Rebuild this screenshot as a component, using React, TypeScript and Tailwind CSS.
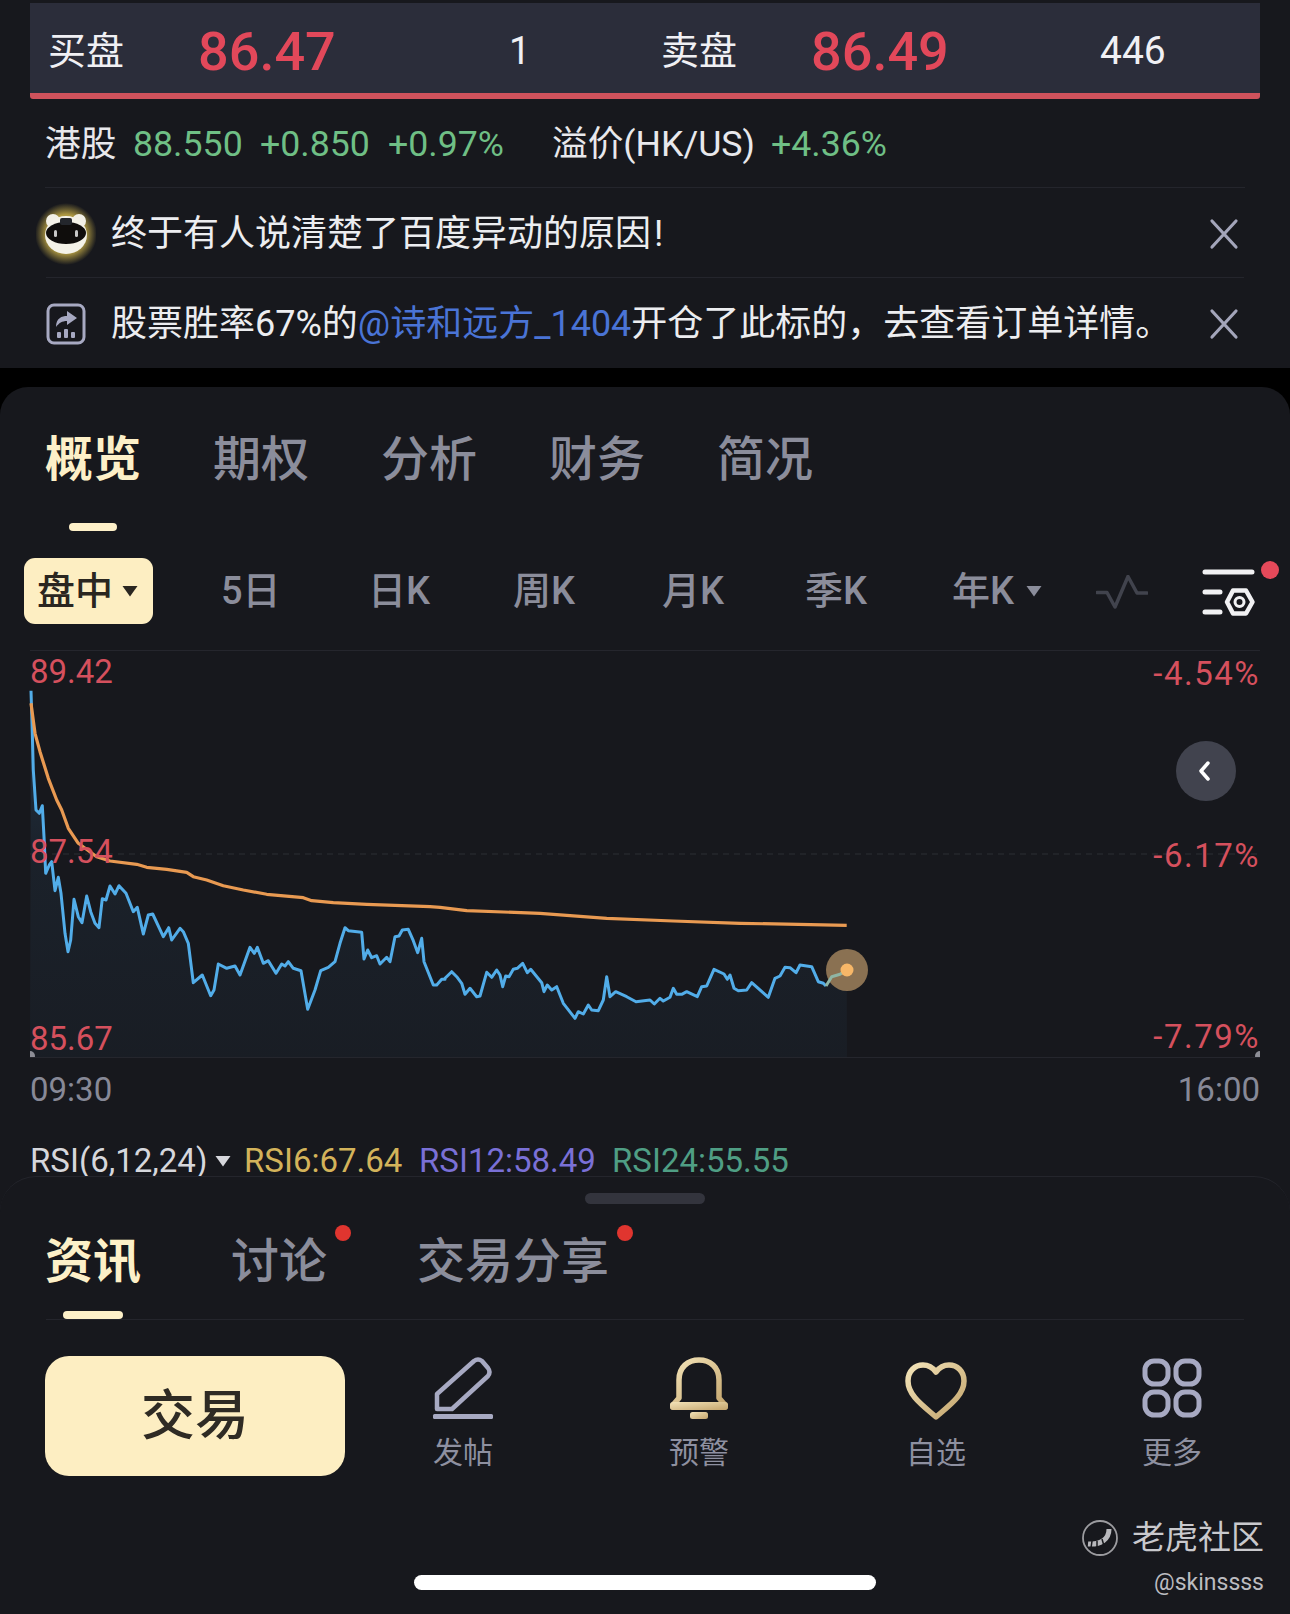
import React from "react";

const z3 = (p: number[][]) => p.map(([x, y]) => `${(x / 3).toFixed(1)},${(660 + y / 3).toFixed(1)}`);
const z4 = (p: number[][]) => p.map(([x, y]) => `${(440 + x / 3).toFixed(1)},${(860 + y / 3).toFixed(1)}`);

const blue = [
  ...z3([[93,92],[97,220],[100,330],[108,450],[118,460],[127,437],[132,530],[137,640],[148,615],[155,605],[165,692],[175,652],[183,700],[195,820],[204,875],[212,840],[222,718],[235,770],[246,788],[260,708],[272,755],[285,790],[297,803],[307,716],[318,720],[330,678],[345,702],[357,677],[378,700],[400,755],[412,742],[430,822],[445,765],[458,762],[490,830],[506,803],[515,840],[540,805],[550,815],[565,850],[580,968],[607,945],[632,1007],[642,990],[655,912],[680,925],[705,918],[720,945],[750,862],[763,880],[772,862],[790,910],[805,902],[828,940],[845,912],[855,918],[865,905],[880,925],[903,932],[923,1048],[945,990],[962,932],[985,922],[1005,905],[1020,850],[1035,803],[1045,812],[1085,817],[1092,897],[1103,870],[1115,893],[1130,887],[1140,912],[1160,892],[1170,905],[1185,830],[1197,828],[1207,810],[1225,808],[1240,842],[1253,878],[1265,835],[1272,905],[1300,975],[1310,975],[1325,958],[1335,958]]),
  ...z4([[15,355],[35,335],[50,350],[65,370],[75,403],[90,385],[110,410],[120,408],[140,337],[155,352],[170,330],[180,345],[188,380],[197,348],[207,350],[220,328],[232,325],[248,310],[262,338],[272,328],[305,368],[312,395],[322,375],[335,390],[350,380],[370,430],[405,475],[415,455],[430,462],[445,435],[455,450],[475,452],[490,420],[500,350],[510,410],[527,395],[560,410],[588,425],[630,420],[643,432],[660,415],[670,423],[690,412],[700,385],[710,403],[725,403],[740,395],[772,410],[785,380],[800,378],[822,328],[852,342],[862,358],[870,345],[882,385],[895,392],[920,390],[935,368],[985,412],[1005,355],[1020,348],[1035,322],[1050,323],[1068,338],[1080,315],[1115,320],[1135,365],[1150,370],[1158,378]]),
];
const tail = z4([[1158,378],[1175,350],[1200,343],[1220,330]]);
const orange = [
  ...z3([[93,130],[105,220],[120,275],[145,355],[170,420],[185,450],[205,505],[235,550],[290,590],[330,603],[410,613],[440,622],[500,628],[560,637],[580,650],[620,660],[670,677],[730,690],[800,703],[910,713],[935,722],[1000,728],[1100,733],[1290,740]]),
  ...z4([[0,142],[80,152],[300,160],[500,175],[700,183],[900,190],[1220,196]]),
];
const area = `30,1057 ${blue.join(" ")} ${tail.join(" ")} 847,1057`;

function Chart() {
  return (
    <svg viewBox="0 650 1290 408" className="block w-[1290px] h-[408px]">
      <defs>
        <linearGradient id="area" x1="0" y1="0" x2="0" y2="1">
          <stop offset="0" stopColor="#3f8fcf" stopOpacity="0.26" />
          <stop offset="0.45" stopColor="#3f7fb0" stopOpacity="0.09" />
          <stop offset="1" stopColor="#3f7fb0" stopOpacity="0.05" />
        </linearGradient>
      </defs>
      <polygon points={area} fill="url(#area)" />
      <line x1="30" y1="854" x2="1260" y2="854" stroke="#26272d" strokeWidth="1.5" strokeDasharray="6 5" />
      <polyline points={blue.join(" ")} fill="none" stroke="#52ade9" strokeWidth="3" strokeLinejoin="round" />
      <polyline points={orange.join(" ")} fill="none" stroke="#e99a52" strokeWidth="3.2" strokeLinejoin="round" />
      <circle cx="847" cy="970" r="21" fill="#8a7152" />
      <polyline points={tail.join(" ")} fill="none" stroke="#8fb5a4" strokeWidth="3" strokeLinejoin="round" />
      <circle cx="847" cy="970" r="6.5" fill="#f7b768" />
      <path d="M30 1052 A5 5 0 0 1 30 1062 Z" fill="#8d8e96" transform="translate(0 -1)" />
      <path d="M1260 1052 A5 5 0 0 0 1260 1062 Z" fill="#8d8e96" transform="translate(0 -1)" />
    </svg>
  );
}

const Close = () => (
  <svg width="32" height="32" viewBox="0 0 32 32" className="shrink-0 mr-[4px]">
    <path d="M4 3 L28 29 M28 3 L4 29" stroke="#a3a5ba" strokeWidth="3.200" strokeLinecap="round" />
  </svg>
);

const Panda = () => (
  <svg width="60" height="62" viewBox="3 2 60 62" className="shrink-0">
    <defs>
      <radialGradient id="glow">
        <stop offset="0.62" stopColor="#d4b94c" stopOpacity="0.8" />
        <stop offset="1" stopColor="#c9b04a" stopOpacity="0" />
      </radialGradient>
    </defs>
    <circle cx="33" cy="33" r="31" fill="url(#glow)" />
    <circle cx="20" cy="20" r="7" fill="#f2f0e6" />
    <circle cx="46" cy="20" r="7" fill="#f2f0e6" />
    <ellipse cx="33" cy="34" rx="21" ry="19" fill="#f4f2e8" />
    <ellipse cx="33" cy="32" rx="20" ry="11" fill="#0f0d0c" />
    <rect x="27" y="17" width="12" height="7" rx="2" fill="#23262c" />
    <rect x="21" y="29" width="3" height="7" rx="1.500" fill="#c8c8c8" />
    <rect x="42" y="29" width="3" height="7" rx="1.500" fill="#c8c8c8" />
  </svg>
);

const ShareIcon = () => (
  <svg width="40" height="42" viewBox="0 0 40 42" className="shrink-0">
    <rect x="2" y="2" width="36" height="38" rx="6" fill="none" stroke="#a7a9c2" strokeWidth="3" />
    <path d="M10 24 C10 15 16 13 21 13 V8 L31 15 L21 22 V18 C16 18 13 20 10 24 Z" fill="#a7a9c2" />
    <rect x="11" y="29" width="4" height="6" rx="1" fill="#a7a9c2" />
    <rect x="18" y="26" width="4" height="9" rx="1" fill="#a7a9c2" />
    <rect x="25" y="29" width="4" height="6" rx="1" fill="#a7a9c2" />
  </svg>
);

const Tri = ({ color }: { color: string }) => (
  <svg width="16" height="12" viewBox="0 0 16 12" className="shrink-0">
    <path d="M0.5 1 H15.500 L8 11.500 Z" fill={color} />
  </svg>
);

const Pulse = () => (
  <svg width="52" height="34" viewBox="0 0 52 34">
    <path d="M1 17.500 H11 L19 32 L32 1.500 L41 18 H51" fill="none" stroke="#41434d" strokeWidth="3.500" strokeLinecap="round" strokeLinejoin="round" />
  </svg>
);

const Settings = () => (
  <svg width="78" height="62" viewBox="0 0 78 62">
    <path d="M3 11 H50 M3 31 H18 M3 51 H18" stroke="#f1f1f3" strokeWidth="5" strokeLinecap="round" />
    <path d="M25 41 L31 29.500 H44 L50.500 41 L44 52.500 H31 Z" fill="none" stroke="#f1f1f3" strokeWidth="4.500" strokeLinejoin="round" />
    <circle cx="37.500" cy="41" r="4.500" fill="none" stroke="#f1f1f3" strokeWidth="3" />
    <circle cx="68" cy="9" r="9" fill="#e5495a" />
  </svg>
);

const Pencil = () => (
  <svg width="64" height="64" viewBox="0 0 64 64">
    <path d="M6 53 V38 L43 5 Q47 2 51 5 L57 12 Q60 16 57 20 L21 53 Z" fill="none" stroke="#a7a9c2" strokeWidth="4.500" strokeLinejoin="round" />
    <rect x="2" y="58" width="60" height="5" rx="1.500" fill="#a7a9c2" />
  </svg>
);

const GoldDefs = ({ id }: { id: string }) => (
  <defs>
    <linearGradient id={id} x1="0" y1="0" x2="1" y2="1">
      <stop offset="0" stopColor="#f3e3b8" />
      <stop offset="1" stopColor="#c3a46c" />
    </linearGradient>
  </defs>
);

const Bell = () => (
  <svg width="64" height="64" viewBox="0 0 64 64">
    <GoldDefs id="g1" />
    <path d="M12 42 V24 C12 11 21 4 32 4 C43 4 52 11 52 24 V42 L58 49 V51 H6 V49 Z" fill="none" stroke="url(#g1)" strokeWidth="5.500" strokeLinejoin="round" />
    <rect x="3" y="46" width="58" height="8" rx="3" fill="url(#g1)" />
    <rect x="23" y="56" width="18" height="7" rx="2.500" fill="url(#g1)" />
  </svg>
);

const Heart = () => (
  <svg width="64" height="60" viewBox="0 0 64 60" className="mt-[6px]">
    <GoldDefs id="g2" />
    <path d="M32 56 C18 44 4 34 4 20 C4 10 11 4 19 4 C25 4 29 7 32 11 C35 7 39 4 45 4 C53 4 60 10 60 20 C60 34 46 44 32 56 Z" fill="none" stroke="url(#g2)" strokeWidth="5.500" strokeLinejoin="round" />
  </svg>
);

const Grid4 = () => (
  <svg width="60" height="60" viewBox="0 0 60 60">
    {[[3, 3], [34, 3], [3, 34], [34, 34]].map(([x, y]) => (
      <rect key={`${x}-${y}`} x={x} y={y} width="23" height="23" rx="9" fill="none" stroke="#a7a9c2" strokeWidth="5" />
    ))}
  </svg>
);

const TigerLogo = () => (
  <svg width="38" height="38" viewBox="0 0 38 38" className="shrink-0">
    <circle cx="19" cy="19" r="17" fill="none" stroke="#9c9ca0" strokeWidth="1.800" />
    <path d="M28 10 C28 20 20 26 7 25" fill="none" stroke="#b8b8bc" strokeWidth="5" />
    <path d="M11 22 L10 29 M16 22 L16 30 M21 20 L23 27" stroke="#17181d" strokeWidth="1.500" />
  </svg>
);

const Action = ({ label, children, w }: { label: string; children: React.ReactNode; w: string }) => (
  <div className={`flex flex-col items-center ${w}`}>
    <div className="h-[64px] flex items-center justify-center">{children}</div>
    <span className="mt-[15px] text-[30px] leading-[36px] text-[#8e90a0]">{label}</span>
  </div>
);

export default function App() {
  return (
    <div
      lang="zh-CN"
      className="w-[1290px] h-[1614px] overflow-hidden bg-black flex flex-col relative font-[family-name:Roboto,'Noto_Sans_CJK_SC',sans-serif]"
    >
      {/* quote section */}
      <section className="h-[368px] shrink-0 bg-[#17181d] pt-[3px] px-[30px]">
        <div className="h-[96px] bg-[#2b2d3a] border-b-[6px] border-[#d0525c] rounded-b-[3px] flex items-center pl-[18px] pt-[6px] text-[#f0f0f4]">
          <span className="w-[150px] text-[38px]">买盘</span>
          <span className="w-[311px] text-[54px] font-medium text-[#e2485a]">86.47</span>
          <span className="w-[152px] text-[38px]">1</span>
          <span className="w-[150px] text-[38px]">卖盘</span>
          <span className="w-[289px] text-[54px] font-medium text-[#e2485a]">86.49</span>
          <span className="text-[39px]">446</span>
        </div>
        <div className="h-[89px] mx-[15px] pt-[3px] flex items-center text-[35.7px] text-[#6fbf85] border-b border-[#24252c]">
          <span className="w-[88px] text-[#e8e8ec]">港股</span>
          <span className="w-[127px]">88.550</span>
          <span className="w-[128px]">+0.850</span>
          <span className="w-[164px]">+0.97%</span>
          <span className="w-[219px] text-[#e8e8ec]">溢价(HK/US)</span>
          <span>+4.36%</span>
        </div>
        <div className="h-[90px] mx-[16px] pt-[2px] flex items-center border-b border-[#24252c]">
          <div className="w-[66px] -ml-[13px] mr-[12px] shrink-0 flex justify-center">
            <Panda />
          </div>
          <span className="flex-1 text-[36px] text-[#ecedf0]">
            终于有人说清楚了百度异动的原因<span className="ml-[3px]">!</span>
          </span>
          <Close />
        </div>
        <div className="h-[89px] mx-[16px] pt-[2px] flex items-center">
          <div className="w-[65px] shrink-0 mr-[0px]">
            <ShareIcon />
          </div>
          <span className="flex-1 text-[36px] text-[#ecedf0] whitespace-nowrap">
            股票胜率67%的<span className="text-[#4a74d6]">@诗和远方_1404</span>开仓了此标的，去查看订单详情。
          </span>
          <Close />
        </div>
      </section>

      {/* main card */}
      <main className="mt-[19px] flex-1 flex flex-col rounded-t-[28px] bg-[#17181d] min-h-0">
        <div className="h-[136px] pt-[10px] pl-[45px] flex items-center gap-[72px] text-[48px] text-[#8b8d9b] font-medium shrink-0">
          <span className="font-bold text-[#fdf0c8]">概览</span>
          <span>期权</span>
          <span>分析</span>
          <span>财务</span>
          <span>简况</span>
        </div>
        <div className="h-[8px] w-[48px] ml-[69px] rounded-full bg-[#fdf0c8] shrink-0" />

        <div className="mt-[27px] h-[66px] flex items-center pl-[24px] text-[38px] text-[#8b8d9b] font-medium shrink-0">
          <div className="w-[129px] h-[66px] rounded-[11px] bg-[#fdeec2] text-[#2a2620] flex items-center pl-[13px] gap-[9px] mr-[69px]">
            <span>盘中</span>
            <Tri color="#2a2620" />
          </div>
          <span className="w-[147px] -ml-[1px]">5日</span>
          <span className="w-[145px]">日K</span>
          <span className="w-[149px]">周K</span>
          <span className="w-[143px]">月K</span>
          <span className="w-[147px]">季K</span>
          <span className="w-[74px]">年K</span>
          <span className="mr-[54px] flex">
            <Tri color="#8b8d9b" />
          </span>
          <span className="mr-[54px] mt-[2px] flex">
            <Pulse />
          </span>
          <span className="flex mt-[2px]">
            <Settings />
          </span>
        </div>

        <div className="mt-[26px] mx-[30px] border-t border-[#25262d] shrink-0" />

        <div className="relative h-[408px] shrink-0 -mt-[1px]">
          <Chart />
          <div className="absolute left-[30px] right-[30px] bottom-0 border-b border-[#25262d]" />
          <span className="absolute left-[30px] top-[1px] text-[33px] leading-[42px] text-[#d5505d]">89.42</span>
          <span className="absolute left-[30px] top-[181px] text-[33px] leading-[42px] text-[#d5505d]">87.54</span>
          <span className="absolute left-[30px] top-[368px] text-[33px] leading-[42px] text-[#d5505d]">85.67</span>
          <span className="absolute right-[30px] top-[3px] text-[33px] tracking-[1.500px] leading-[42px] text-[#d5505d]">-4.54%</span>
          <span className="absolute right-[30px] top-[185px] text-[33px] tracking-[1.500px] leading-[42px] text-[#d5505d]">-6.17%</span>
          <span className="absolute right-[30px] top-[366px] text-[33px] tracking-[1.500px] leading-[42px] text-[#d5505d]">-7.79%</span>
          <div className="absolute left-[1176px] top-[91px] w-[60px] h-[60px] rounded-full bg-[#41434e] flex items-center justify-center">
            <svg width="20" height="24" viewBox="0 0 20 24" className="-ml-[2px]">
              <path d="M13 4 L6 12 L13 20" fill="none" stroke="#fff" strokeWidth="3.500" strokeLinecap="round" strokeLinejoin="round" />
            </svg>
          </div>
        </div>

        <div className="h-[60px] pt-[4px] mx-[30px] flex items-center justify-between text-[33px] text-[#878997] shrink-0">
          <span>09:30</span>
          <span>16:00</span>
        </div>

        <div className="h-[58px] pl-[30px] flex items-end text-[33px] leading-[30px] shrink-0">
          <span className="text-[#d6d7dc] w-[185px] whitespace-nowrap">RSI(6,12,24)</span>
          <span className="w-[29px] h-[30px] flex items-center">
            <Tri color="#d6d7dc" />
          </span>
          <span className="w-[175px] text-[#d3b35a]">RSI6:67.64</span>
          <span className="w-[193px] text-[#7a70d6]">RSI12:58.49</span>
          <span className="text-[#4f9e84]">RSI24:55.55</span>
        </div>

        {/* bottom sheet */}
        <div className="flex-1 rounded-t-[36px] border-t border-[#24252c] bg-[#17181d] flex flex-col">
          <div className="mt-[16px] mx-auto w-[120px] h-[11px] rounded-full bg-[#33343d] shrink-0" />
          <div className="h-[107px] pl-[45px] pt-[8px] flex items-center text-[48px] text-[#8b8d9b] font-medium shrink-0">
            <span className="font-bold text-[#fdf0c8] w-[186px]">资讯</span>
            <span className="w-[186px] relative">
              讨论
              <i className="absolute left-[104px] top-[-1px] w-[16px] h-[16px] rounded-full bg-[#e0352f]" />
            </span>
            <span className="relative">
              交易分享
              <i className="absolute left-[200px] top-[-1px] w-[16px] h-[16px] rounded-full bg-[#e0352f]" />
            </span>
          </div>
          <div className="h-[8px] w-[60px] ml-[63px] rounded-full bg-[#fdf0c8] shrink-0" />
          <div className="mx-[46px] border-t border-[#24252c] shrink-0" />

          <div className="mt-[36px] pl-[45px] flex items-start shrink-0">
            <div className="w-[300px] h-[120px] rounded-[24px] bg-[#fdeec2] text-[#2f2b24] text-[54px] font-medium flex items-center justify-center">
              交易
            </div>
            <div className="ml-[58px] flex">
              <Action label="发帖" w="w-[120px]"><Pencil /></Action>
              <div className="w-[116px]" />
              <Action label="预警" w="w-[120px]"><Bell /></Action>
              <div className="w-[117px]" />
              <Action label="自选" w="w-[120px]"><Heart /></Action>
              <div className="w-[116px]" />
              <Action label="更多" w="w-[120px]"><Grid4 /></Action>
            </div>
          </div>

          <div className="mt-auto mb-[24px] mx-auto w-[462px] h-[15px] rounded-full bg-white shrink-0" />
        </div>
      </main>

      {/* watermark */}
      <div className="absolute right-[26px] top-[1516px] flex flex-col items-end text-[#c9c9cd]">
        <div className="flex items-center gap-[13px] text-[33px] leading-[44px]">
          <TigerLogo />
          <span>老虎社区</span>
        </div>
        <span className="mt-[7px] text-[23px] leading-[32px] text-[#bcbcc0]">@skinssss</span>
      </div>
    </div>
  );
}
